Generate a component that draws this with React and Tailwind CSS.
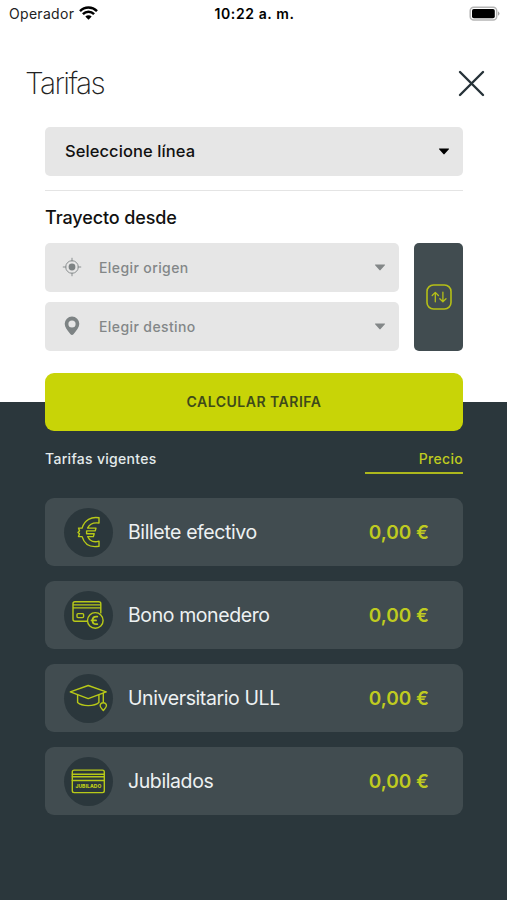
// App.jsx
// Fare calculator screen: trip selectors on top, current fares below.

import React from 'react';

const CaretDown = ({ className = '' }) => (
  <svg viewBox="0 0 12 7" className={`h-[7px] w-3 ${className}`} fill="currentColor">
    <path d="M1.5 0.5h9q1 0 .4.8L6.6 6.1q-.6.6-1.2 0L1.1 1.3q-.6-.8.4-.8z" />
  </svg>
);

const OriginIcon = () => (
  <svg viewBox="0 0 20 20" className="-mt-px size-5" fill="none" stroke="#8a8f90" strokeWidth="1">
    <circle cx="10" cy="10" r="6.3" />
    <circle cx="10" cy="10" r="3.4" fill="#7d8384" stroke="none" />
    <path d="M10 .8v3.6M10 15.6v3.6M.8 10h3.6M15.6 10h3.6" />
  </svg>
);

const PinIcon = () => (
  <svg viewBox="0 0 20 20" className="-mt-px size-5" fill="#7d8384">
    <path
      fillRule="evenodd"
      d="M10 .5a7.3 7.3 0 0 0-7.3 7.3c0 3.6 2.6 6.3 5.6 10.1q1.7 2.3 3.4 0c3-3.8 5.6-6.5 5.6-10.1A7.3 7.3 0 0 0 10 .5zm0 3.9a3.6 3.6 0 1 1 0 7.2 3.6 3.6 0 0 1 0-7.2z"
    />
  </svg>
);

const SwapIcon = () => (
  <svg viewBox="0 0 26 26" className="size-[26px]" fill="none" stroke="#b5bf17" strokeLinecap="round" strokeLinejoin="round">
    <rect x="1" y="1" width="24" height="24" rx="6.5" strokeWidth="1.6" />
    <path strokeWidth="1.3" d="M9.3 17.8V8.6M6.2 11.5l3.1-3.1 3.1 3.1M16.9 8.2v9.4M13.8 14.7l3.1 3.1 3.1-3.1" />
  </svg>
);

const EuroIcon = () => (
  <path d="M35 9.8v5.2c-4.8-.6-9.5.7-11.4 5.1H32l-.8 2.8h-8.6v2.9h7.6l-.8 2.8h-5.8c1.8 4.400 6.400 6 11.400 4.600v5c-7.800 1.400-14.400-1.300-16.900-9.600h-3.600l1-2.800-1.500-1.400 1.500-1.600-1-2.700h3.600C20.500 11.700 27.400 8.500 35 9.800z" />
);

const WalletCardIcon = () => (
  <>
    <path d="M23 30.2H11a2 2 0 0 1-2-2V12.700a2 2 0 0 1 2-2h23.800a2 2 0 0 1 2 2v9.200M9 13.900h27.600M9 16.900h27.600" />
    <rect x="13" y="22.6" width="6.6" height="4" rx="1" />
    <circle cx="31.3" cy="29.4" r="7.8" />
    <path strokeWidth="1.8" d="M33.300 25.700c-3.700-.6-4.800 1.500-4.800 3.700s1.100 4.300 4.800 3.700M27.500 29.400h4.600" />
  </>
);

const GraduationIcon = () => (
  <>
    <path d="M24.200 11.500 42.200 17.900 24.200 24.600 6.300 17.900z" />
    <path d="M13.600 21v7.600c4.500 4 16.800 4 21.300 0V21M39.300 19.200v9.500M39.300 28.700c2.100 0 3.300 1.500 3.100 3.300-.2 1.400-1.500 2.600-3.100 4.500-1.600-1.900-2.900-3.100-3.100-4.500-.2-1.800 1-3.300 3.100-3.300z" />
  </>
);

const SeniorCardIcon = () => (
  <>
    <rect x="8.3" y="13.1" width="32" height="22.5" rx="1.8" />
    <path d="M8.300 17.200h32M8.300 19.800h32M8.300 23.500h32" />
    <text
      x="24.4"
      y="31.4"
      textAnchor="middle"
      textLength="26"
      fontSize="5"
      fontWeight="800"
      fontFamily="Inter, sans-serif"
      fill="#c0cf16"
      stroke="none"
    >
      JUBILADO
    </text>
  </>
);

const fares = [
  { name: 'Billete efectivo', price: '0,00 €', Icon: EuroIcon },
  { name: 'Bono monedero', price: '0,00 €', Icon: WalletCardIcon },
  { name: 'Universitario ULL', price: '0,00 €', Icon: GraduationIcon },
  { name: 'Jubilados', price: '0,00 €', Icon: SeniorCardIcon },
];

const StatusBar = () => (
  <div className="grid h-7 grid-cols-3 items-center pr-[7px] pl-[9px] text-[14px] text-black">
    <div className="flex items-center gap-[5px]">
      <span className="pb-0.5 tracking-[0.3px] text-[#222]">Operador</span>
      <svg viewBox="0 0 19 14" className="-mt-0.5 h-3.5 w-[19px]" fill="none" stroke="#000" strokeWidth="2.5">
        <path d="M1 5.1c4.800-4.700 12.200-4.700 17 0M3.900 8.100c3.200-3.100 8-3.100 11.200 0" />
        <path d="M6.300 10.500c1.900-1.700 4.500-1.700 6.400 0L9.500 13.700z" fill="#000" stroke="none" />
      </svg>
    </div>
    <span className="pb-px text-center font-semibold tracking-[0.6px] whitespace-nowrap">10:22 a. m.</span>
    <svg viewBox="0 0 31 15" className="-mt-0.5 h-[15px] w-[31px] justify-self-end">
      <rect x="1.2" y="1.2" width="26.5" height="12.8" rx="3.5" fill="none" stroke="#b5b5b5" strokeWidth="1.5" />
      <rect x="3" y="3" width="22.8" height="9.2" rx="1.8" />
      <path d="M29 5.2v4.600q3-2.300 0-4.600" fill="#a5a5a5" />
    </svg>
  </div>
);

const PlaceSelect = ({ icon, label }) => (
  <button type="button" className="flex h-[49px] w-full items-center rounded-[5px] bg-[#e6e6e6] pr-[13px] pl-[17px] text-[#838788]">
    {icon}
    <span className="ml-[17px] flex-1 pb-px text-left text-[14px] font-medium tracking-[0.4px]">{label}</span>
    <CaretDown />
  </button>
);

const FareRow = ({ name, price, Icon }) => (
  <li className="flex h-[68px] items-center rounded-[9px] bg-[#414c50] pr-[34px] pl-[19px]">
    <div className="size-[49px] rounded-full bg-[#2b373c]">
      <svg viewBox="0 0 49 49" className="size-[49px]" fill="none" stroke="#b8c918" strokeWidth="1.4" strokeLinejoin="round" strokeLinecap="round">
        <Icon />
      </svg>
    </div>
    <span className="ml-[15px] flex-1 pt-0.5 text-[19.5px] tracking-[-0.4px] text-[#edf1f2]">{name}</span>
    <span className="pt-0.5 text-[19px] font-semibold text-[#bfcb20]">{price}</span>
  </li>
);

const App = () => {
  return (
    <div className="flex h-[900px] w-[507px] flex-col overflow-hidden bg-white font-['Inter',sans-serif]">
      <StatusBar />

      <header className="flex h-[99px] items-center justify-between pt-[11px] pr-[22px] pl-[25px]">
        <h1 className="text-[30px] font-extralight tracking-[-1.6px] text-[#222]">Tarifas</h1>
        <button type="button" aria-label="Cerrar">
          <svg viewBox="0 0 27 27" className="size-[27px]" fill="none" stroke="#263238" strokeWidth="2.4" strokeLinecap="round">
            <path d="M2 2l23 23M25 2L2 25" />
          </svg>
        </button>
      </header>

      <section className="h-[246px] pr-11 pl-[45px]">
        <button type="button" className="flex h-[49px] w-full items-center justify-between rounded-[5px] bg-[#e6e6e6] pr-[13px] pl-5">
          <span className="text-[16.5px] font-medium tracking-[0.08px] text-[#111]">Seleccione línea</span>
          <CaretDown className="text-black" />
        </button>
        <div className="mt-3.5 h-px bg-[#e4e4e4]" />
        <h2 className="mt-[15px] text-[18px] leading-6 font-medium tracking-[-0.1px] text-[#111]">Trayecto desde</h2>
        <div className="mt-[13px] flex h-[108px] gap-[15px]">
          <div className="flex flex-1 flex-col justify-between">
            <PlaceSelect icon={<OriginIcon />} label="Elegir origen" />
            <PlaceSelect icon={<PinIcon />} label="Elegir destino" />
          </div>
          <button type="button" aria-label="Intercambiar" className="flex w-[49px] items-center justify-center rounded-[5px] bg-[#414c50]">
            <SwapIcon />
          </button>
        </div>
      </section>

      <section className="bg-linear-to-b from-white from-[29px] to-[#2b373c] to-[29px] pr-11 pl-[45px]">
        <button type="button" className="block h-[58px] w-full rounded-[9px] bg-[#c8d407] pb-0.5 text-[14px] font-semibold tracking-[0.5px] text-[#3e4a1a]">
          CALCULAR TARIFA
        </button>
      </section>

      <section className="flex-1 bg-[#2b373c] pr-11 pl-[45px]">
        <div className="flex h-[43px] items-end justify-between text-[14px] font-medium tracking-[0.3px]">
          <span className="pb-[5px] text-[#e4ebec]">Tarifas vigentes</span>
          <span className="w-[98px] border-b-2 border-[#acb71d] pb-[3px] text-right text-[#bfcb20]">Precio</span>
        </div>
        <ul className="mt-6 flex flex-col gap-[15px]">
          {fares.map((fare) => (
            <FareRow key={fare.name} {...fare} />
          ))}
        </ul>
      </section>
    </div>
  );
};

export default App;
